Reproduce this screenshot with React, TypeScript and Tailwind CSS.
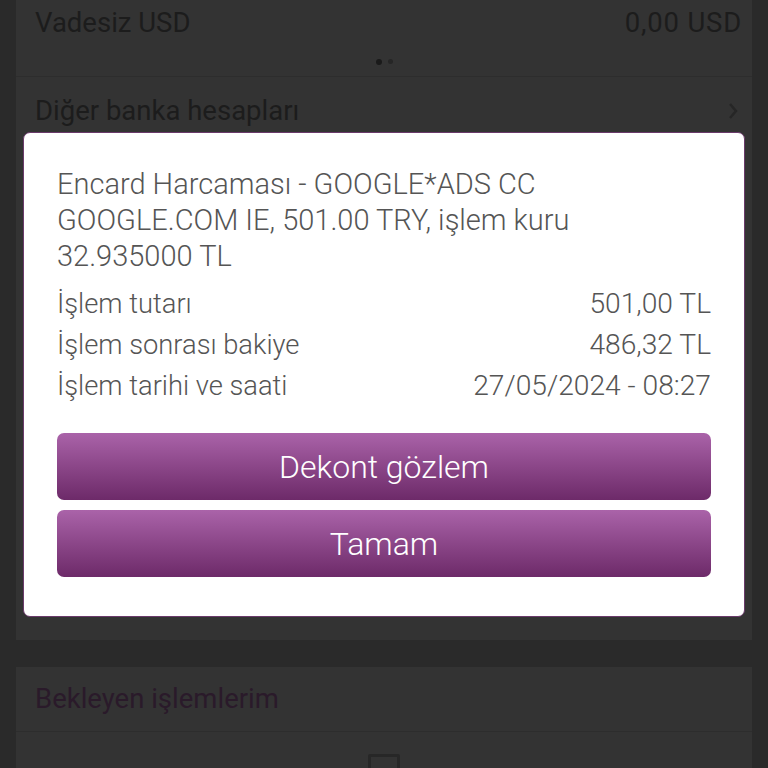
import React from "react";

const font = { fontFamily: "Roboto, 'Noto Sans', sans-serif" };

function Row({ label, value }: { label: string; value: string }) {
  return (
    <div className="flex justify-between items-center h-[41px]">
      <span className="text-[27.3px]">{label}</span>
      <span className="text-[28.2px]">{value}</span>
    </div>
  );
}

export default function App() {
  return (
    <div className="relative w-[768px] h-[768px] overflow-hidden bg-[#2a2a2a]" style={font}>
      {/* underlying page (dimmed) */}
      <div className="px-4 flex flex-col">
        <div className="bg-[#333333] h-[640px] flex flex-col">
          <div className="h-[45px] flex items-center justify-between pl-[19px] pr-[10px] text-[27.5px] text-[#1c1c1c]">
            <span>Vadesiz USD</span>
            <span className="tracking-[0.8px]">0,00 USD</span>
          </div>
          <div className="h-[31px] flex justify-center items-start pt-[14px] gap-[6px]">
            <span className="w-[6px] h-[6px] rounded-full bg-[#1a1a1a]" />
            <span className="w-[5px] h-[5px] rounded-full bg-[#262626]" />
          </div>
          <div className="h-px bg-[#2d2d2d]" />
          <div className="h-[68px] flex items-center justify-between pl-[19px] pr-[12px] text-[27.5px] text-[#1c1c1c]">
            <span>Diğer banka hesapları</span>
            <svg width="14" height="22" viewBox="0 0 14 22">
              <path d="M4 4 L10 11 L4 18" stroke="#262626" strokeWidth="2.5" fill="none" />
            </svg>
          </div>
          <div className="flex-1" />
        </div>
        <div className="h-[27px]" />
        <div className="bg-[#333333] h-[200px] flex flex-col">
          <div className="h-[64px] flex items-center px-[19px] text-[27.5px] text-[#2a1a2a]">
            <span>Bekleyen işlemlerim</span>
          </div>
          <div className="h-px bg-[#2d2d2d]" />
          <div className="flex justify-center pt-[22px]">
            <div className="w-[32px] h-[20px] border-[3px] border-[#272727] rounded-[2px]" />
          </div>
        </div>
      </div>

      {/* modal */}
      <div className="absolute left-[23px] top-[132px] w-[722px] h-[485px] bg-white rounded-[7px] border border-[#6a3a6a] px-[33px] pt-[33px] box-border font-light">
        <div className="text-[29px] leading-[36px] text-[#555555] whitespace-nowrap">
          Encard Harcaması - GOOGLE*ADS CC
          <br />
          GOOGLE.COM IE, 501.00 TRY, işlem kuru
          <br />
          32.935000 TL
        </div>
        <div className="mt-[10px] text-[#555555]">
          <Row label="İşlem tutarı" value="501,00 TL" />
          <Row label="İşlem sonrası bakiye" value="486,32 TL" />
          <Row label="İşlem tarihi ve saati" value="27/05/2024 - 08:27" />
        </div>
        <div className="mt-[26px] flex flex-col gap-[10px]">
          <button className="h-[67px] w-full rounded-[7px] bg-gradient-to-b from-[#aa63a9] to-[#6d2a69] text-white text-[32px] font-light flex items-center justify-center">
            Dekont gözlem
          </button>
          <button className="h-[67px] w-full rounded-[7px] bg-gradient-to-b from-[#aa63a9] to-[#6d2a69] text-white text-[32px] font-light flex items-center justify-center">
            Tamam
          </button>
        </div>
      </div>
    </div>
  );
}
